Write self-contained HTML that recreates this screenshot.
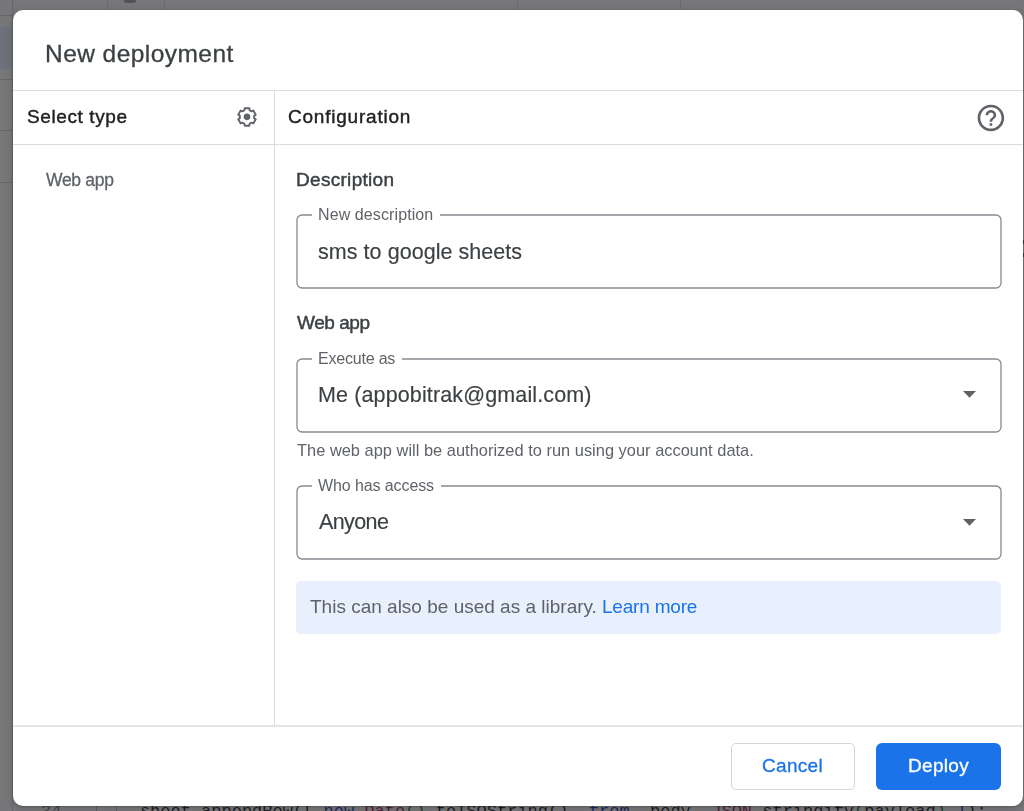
<!DOCTYPE html>
<html><head><meta charset="utf-8"><style>
html,body{margin:0;padding:0;width:1024px;height:811px;overflow:hidden;background:#fff;font-family:"Liberation Sans",sans-serif}
.t{position:absolute;line-height:1;white-space:nowrap;will-change:transform}
.hl{position:absolute;height:1px;background:#dadce0}
.vl{position:absolute;width:1px;background:#dadce0}
.box{position:absolute;box-sizing:border-box;border:1.3px solid #80868b;border-radius:5px}
.code{position:absolute;font-family:"Liberation Mono",monospace;font-size:17px;line-height:1;white-space:pre}
.gap{position:absolute;background:#fff}
#dlg{position:absolute;left:13px;top:9.6px;width:1009.5px;height:796.5px;background:#fff;border-radius:10px;box-shadow:0 1px 2px rgba(0,0,0,.18),0 2px 6px 2px rgba(0,0,0,.1)}
</style></head><body>
<div id="bg">
<div style="position:absolute;left:12px;top:0;width:1px;height:811px;background:#d5d7db"></div>
<div style="position:absolute;left:0;top:15px;width:12px;height:1px;background:#d5d7db"></div>
<div style="position:absolute;left:0;top:27px;width:12px;height:42px;background:#e8f0fe"></div>
<div style="position:absolute;left:0;top:79px;width:12px;height:1px;background:#d5d7db"></div>
<div style="position:absolute;left:0;top:130px;width:12px;height:1px;background:#d5d7db"></div>
<div style="position:absolute;left:0;top:182px;width:12px;height:1px;background:#d5d7db"></div>
<div style="position:absolute;left:107px;top:0;width:1px;height:10px;background:#e3e4e6"></div>
<div style="position:absolute;left:164px;top:0;width:1px;height:10px;background:#e3e4e6"></div>
<div style="position:absolute;left:517px;top:0;width:1px;height:10px;background:#e3e4e6"></div>
<div style="position:absolute;left:680px;top:0;width:1px;height:10px;background:#e3e4e6"></div>
<div style="position:absolute;left:124px;top:0;width:12px;height:3px;background:#9aa0a6;border-radius:0 0 2px 2px"></div>
<div style="position:absolute;left:96px;top:790px;width:1px;height:21px;background:#c0c2c6"></div>
<div style="position:absolute;left:116px;top:790px;width:1px;height:21px;background:#c0c2c6"></div>
<div class="code" style="left:41px;top:803.18px;color:#80868b">34</div>
<div class="code" style="left:139.9px;top:803.18px;color:#202124">sheet.appendRow([ <span style="color:#1a3bc5">new</span> <span style="color:#a71d5d">Date</span><span style="color:#188038">()</span>.toISOString(), <span style="color:#1a3bc5">from</span>, body, <span style="color:#a71d5d">JSON</span>.stringify<span style="color:#188038">(</span>payload<span style="color:#188038">)</span> <span style="color:#1a3bc5">]</span>);</div>
<div style="position:absolute;left:1023px;top:240px;width:1px;height:4px;background:#188038"></div>
<div style="position:absolute;left:1023px;top:253px;width:1px;height:4px;background:#188038"></div>
<div style="position:absolute;left:0;top:0;width:1024px;height:811px;background:rgba(32,33,36,0.612)"></div>
</div>
<div id="dlg"></div>
<div class="t" style="left:45.20px;top:42.26px;font-size:24.5px;color:#3c4043;font-weight:400;letter-spacing:0.45px;-webkit-text-stroke:0.3px #3c4043;">New deployment</div>
<div class="hl" style="left:13px;top:90px;width:1010px"></div>
<div class="hl" style="left:13px;top:144px;width:1010px"></div>
<div class="vl" style="left:274px;top:91px;height:634px"></div>
<div class="hl" style="left:13px;top:725px;width:1010px;height:2px;background:#e4e5e8"></div>
<div class="t" style="left:27.00px;top:106.91px;font-size:19px;color:#202124;font-weight:400;letter-spacing:0.6px;-webkit-text-stroke:0.4px #202124;">Select type</div>
<div class="t" style="left:288.00px;top:107.11px;font-size:19px;color:#202124;font-weight:400;letter-spacing:0.78px;-webkit-text-stroke:0.4px #202124;">Configuration</div>
<svg style="position:absolute;left:235px;top:104.8px" width="24" height="24" viewBox="0 0 24 24">
<path fill="none" stroke="#5f6368" stroke-width="1.9" stroke-linejoin="round" d="M9.40 5.23 L9.66 3.26 L14.34 3.26 L14.60 5.23 L16.56 6.37 L18.40 5.60 L20.74 9.66 L19.16 10.87 L19.16 13.13 L20.74 14.34 L18.40 18.40 L16.56 17.63 L14.60 18.77 L14.34 20.74 L9.66 20.74 L9.40 18.77 L7.44 17.63 L5.60 18.40 L3.26 14.34 L4.84 13.13 L4.84 10.87 L3.26 9.66 L5.60 5.60 L7.44 6.37Z"/>
<circle cx="12" cy="11.85" r="3.3" fill="#5f6368"/></svg>
<svg style="position:absolute;left:974.85px;top:101.8px" width="31.8" height="31.8" viewBox="0 0 24 24"><path fill="#5f6368" d="M11 18h2v-2h-2v2zm1-16C6.48 2 2 6.48 2 12s4.48 10 10 10 10-4.48 10-10S17.52 2 12 2zm0 18c-4.41 0-8-3.59-8-8s3.59-8 8-8 8 3.59 8 8-3.59 8-8 8zm0-14c-2.21 0-4 1.79-4 4h2c0-1.1.9-2 2-2s2 .9 2 2c0 2-3 1.75-3 5h2c0-2.25 3-2.5 3-5 0-2.21-1.79-4-4-4z"/></svg>
<div class="t" style="left:46.00px;top:171.98px;font-size:17.5px;color:#5f6368;font-weight:400;letter-spacing:-0.3px;-webkit-text-stroke:0.3px #5f6368;">Web app</div>
<div class="t" style="left:296.00px;top:169.91px;font-size:19px;color:#3c4043;font-weight:400;letter-spacing:0.3px;-webkit-text-stroke:0.45px #3c4043;">Description</div>
<svg style="position:absolute;left:294.65px;top:213.00px" width="708" height="77"><rect x="2" y="2" width="704" height="73" rx="5" fill="none" stroke="#878b90" stroke-width="1.3"/></svg>
<div class="gap" style="left:312px;top:211px;width:128px;height:8px"></div>
<div class="t" style="left:317.50px;top:207.25px;font-size:16px;color:#5f6368;font-weight:400;letter-spacing:0.1px;">New description</div>
<div class="t" style="left:317.50px;top:241.90px;font-size:21.5px;color:#3c4043;font-weight:400;letter-spacing:0.05px;-webkit-text-stroke:0.15px #3c4043;">sms to google sheets</div>
<div class="t" style="left:296.50px;top:313.41px;font-size:19px;color:#3c4043;font-weight:400;letter-spacing:-0.45px;-webkit-text-stroke:0.45px #3c4043;">Web app</div>
<svg style="position:absolute;left:294.65px;top:356.50px" width="708" height="77"><rect x="2" y="2" width="704" height="73" rx="5" fill="none" stroke="#878b90" stroke-width="1.3"/></svg>
<div class="gap" style="left:312px;top:355px;width:90px;height:8px"></div>
<div class="t" style="left:317.50px;top:350.65px;font-size:16px;color:#5f6368;font-weight:400;letter-spacing:-0.2px;">Execute as</div>
<div class="t" style="left:317.50px;top:385.20px;font-size:21.5px;color:#3c4043;font-weight:400;letter-spacing:0.13px;-webkit-text-stroke:0.15px #3c4043;">Me (appobitrak@gmail.com)</div>
<svg style="position:absolute;left:963px;top:391px" width="13" height="7" viewBox="0 0 13 7"><path d="M0 0h13L6.5 6.7z" fill="#5f6368"/></svg>
<div class="t" style="left:296.80px;top:441.91px;font-size:16.4px;color:#5f6368;font-weight:400;letter-spacing:0.02px;">The web app will be authorized to run using your account data.</div>
<svg style="position:absolute;left:294.65px;top:483.65px" width="708" height="77"><rect x="2" y="2" width="704" height="73" rx="5" fill="none" stroke="#878b90" stroke-width="1.3"/></svg>
<div class="gap" style="left:312px;top:482px;width:128.5px;height:8px"></div>
<div class="t" style="left:318.00px;top:478.25px;font-size:16px;color:#5f6368;font-weight:400;letter-spacing:-0.1px;">Who has access</div>
<div class="t" style="left:318.50px;top:512.40px;font-size:21.5px;color:#3c4043;font-weight:400;letter-spacing:-0.6px;-webkit-text-stroke:0.15px #3c4043;">Anyone</div>
<svg style="position:absolute;left:963px;top:518.5px" width="13" height="7" viewBox="0 0 13 7"><path d="M0 0h13L6.5 6.7z" fill="#5f6368"/></svg>
<div style="position:absolute;left:296px;top:581px;width:705px;height:53px;background:#e8f0fe;border-radius:5px"></div>
<div class="t" style="left:309.50px;top:597.01px;font-size:19px;color:#5f6368;font-weight:400;letter-spacing:0px;">This can also be used as a library.</div>
<div class="t" style="left:601.80px;top:597.01px;font-size:19px;color:#1a73e8;font-weight:400;letter-spacing:-0.2px;">Learn more</div>
<div style="position:absolute;left:731px;top:743px;width:124px;height:47px;box-sizing:border-box;border:1px solid #d3d5d9;border-radius:5px;background:#fff"></div>
<div class="t" style="left:761.50px;top:756.31px;font-size:19px;color:#1a73e8;font-weight:400;letter-spacing:0.3px;-webkit-text-stroke:0.3px #1a73e8;">Cancel</div>
<div style="position:absolute;left:876px;top:742.5px;width:125.4px;height:47.9px;background:#1a73e8;border-radius:6px"></div>
<div class="t" style="left:907.50px;top:756.31px;font-size:19px;color:#ffffff;font-weight:400;letter-spacing:0.3px;-webkit-text-stroke:0.3px #ffffff;">Deploy</div>

</body></html>
